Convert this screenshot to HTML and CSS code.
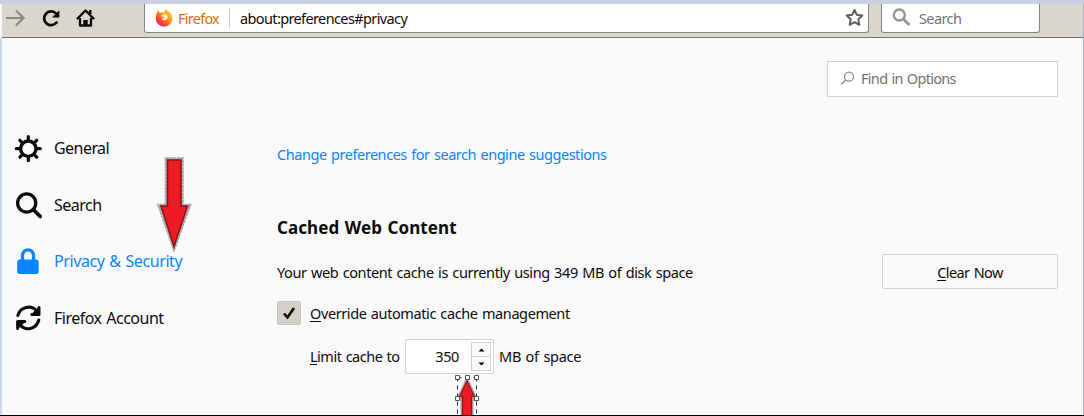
FILE: index.html
```html
<!DOCTYPE html>
<html lang="en">
<head>
<meta charset="utf-8">
<title>Options</title>
<link rel="stylesheet" href="styles.css">
</head>
<body>
<div class="window">
  <header class="toolbar">
    <svg class="nav-buttons" width="100" height="32" viewBox="0 4 100 32" fill="none">
      <path d="M6 18H23M16 10.500L23.500 18L16 25.500" stroke="#8b8984" stroke-width="2.200"/>
      <path d="M55.700 13.200A6.900 6.900 0 1 0 56.500 22.500" stroke="#0c0c0d" stroke-width="2.700" stroke-linecap="round"/>
      <path d="M59.300 10.300V17.500H52Z" fill="#0c0c0d"/>
      <path d="M77.500 18.500L85.500 10.500L93.500 18.500" stroke="#0c0c0d" stroke-width="2.400" stroke-linecap="round" stroke-linejoin="round"/>
      <path d="M80 18V25.500H91V18" stroke="#0c0c0d" stroke-width="2.300" stroke-linejoin="round"/>
      <path d="M83.300 25.500V20H87.700V25.500Z" fill="#0c0c0d"/>
      <path d="M89 10H91.500V14H89Z" fill="#0c0c0d"/>
    </svg>
    <div class="urlbar">
      <svg class="fox" width="18" height="18" viewBox="0 0 18 18">
        <defs><linearGradient id="flame" x1="1" y1="0" x2="0.200" y2="1"><stop offset="0" stop-color="#ffe226"/><stop offset=".45" stop-color="#ff9a16"/><stop offset=".75" stop-color="#ff4032"/><stop offset="1" stop-color="#e8178a"/></linearGradient></defs>
        <path d="M3.300 1.500L5 4C6 3 7.500 3.300 8.500 3.700L11 0.500C14.500 2 17.300 5 17.300 9.500A8.200 8.200 0 0 1 .8 9.500C.8 6.500 1.700 3.300 3.300 1.500Z" fill="url(#flame)"/>
        <path d="M8.500 5.200C7 6 6 6.500 6.500 7.500L9.200 7.800C9.500 9 8 9.300 6.800 10C8 12.500 12.300 11.700 12.500 8C12.500 5.500 10.500 4.500 8.500 5.200Z" fill="#fff0dc"/>
      </svg>
      <span class="identity t-identity">Firefox</span>
      <span class="url t-url">about:preferences#privacy</span>
      <svg class="star" width="19" height="19" viewBox="0 0 19 19"><path d="M9.500 1.800L11.800 6.800L17.300 7.500L13.300 11.300L14.300 16.900L9.500 14.200L4.700 16.900L5.700 11.300L1.700 7.500L7.200 6.800Z" fill="none" stroke="#5b5b5b" stroke-width="1.900" stroke-linejoin="round"/></svg>
    </div>
    <div class="searchbar">
      <svg width="19" height="19" viewBox="0 0 19 19" fill="none" stroke="#939393"><circle cx="7.300" cy="7" r="5.500" stroke-width="2.300"/><path d="M11.300 11L17.500 17" stroke-width="2.800"/></svg>
      <span class="t-search">Search</span>
    </div>
  </header>
  <div class="page">
    <nav class="sidebar">
      <a class="category">
        <svg width="28" height="28" viewBox="-14.300 -14.700 28 28" fill="none" stroke="#0c0c0d"><circle r="7.700" stroke-width="3.400"/><path d="M0-9V-12M0 9V12M-9 0H-12M9 0H12M6.400-6.400L8.400-8.400M-6.400-6.400L-8.400-8.400M6.400 6.400L8.400 8.400M-6.400 6.400L-8.400 8.400" stroke-width="3.200" stroke-linecap="round"/></svg>
        <span class="t-general">General</span>
      </a>
      <a class="category">
        <svg width="28" height="28" viewBox="-.7 -.5 28 28" fill="none" stroke="#0c0c0d"><circle cx="12" cy="11.500" r="9.100" stroke-width="3.300"/><path d="M19 18.500L25.500 25" stroke-width="3.800" stroke-linecap="round"/></svg>
        <span class="t-nav-search">Search</span>
      </a>
      <a class="category selected">
        <svg width="28" height="28" viewBox="-.7 -.5 28 28"><rect x="2.500" y="12" width="21.500" height="14.500" rx="2.500" fill="#0a84ff"/><path d="M7.800 13V8A5.500 5.700 0 0 1 18.800 8V13" fill="none" stroke="#0a84ff" stroke-width="3.300"/></svg>
        <span class="t-privacy">Privacy &amp; Security</span>
      </a>
      <a class="category">
        <svg width="28" height="28" viewBox="-.3 0 28 28" fill="none" stroke="#0c0c0d" stroke-width="3" stroke-linecap="round" stroke-linejoin="round"><path d="M3.500 11.500C6 2.500 17 .5 22.500 7M24.500 16C22 25.500 11 27.500 5.500 20.500"/><path d="M24.700 3.500V10.500H17.500M3.300 24.500V17.500H10.500"/><path d="M24.700 3.500V10.500H17.500ZM3.300 24.500V17.500H10.500Z" fill="#0c0c0d" stroke-width="1"/></svg>
        <span class="t-account">Firefox Account</span>
      </a>
    </nav>
    <main class="main">
      <div class="find">
        <svg width="15" height="15" viewBox="0 0 15 15" fill="none" stroke="#8c8c8c"><circle cx="9" cy="5.700" r="4.500" stroke-width="1.300"/><path d="M5.700 9L1.200 13.300" stroke-width="1.500"/></svg>
        <span class="t-find">Find in Options</span>
      </div>
      <a class="link t-link">Change preferences for search engine suggestions</a>
      <h2 class="heading t-heading">Cached Web Content</h2>
      <div class="usage">
        <span class="t-usage">Your web content cache is currently using 349 MB of disk space</span>
        <button class="clear"><span class="t-clear"><u>C</u>lear Now</span></button>
      </div>
      <label class="override">
        <span class="checkbox"><svg width="14" height="14" viewBox="0 0 14 14"><path d="M2 7.500L5.500 11.500L12 2" fill="none" stroke="#0c0c0d" stroke-width="2.600"/></svg></span>
        <span class="t-override"><u>O</u>verride automatic cache management</span>
      </label>
      <div class="limit">
        <span class="t-limit"><u>L</u>imit cache to</span>
        <div class="number">
          <span class="t-number">350</span>
          <div class="spinner">
            <span class="step"><svg width="7" height="4" viewBox="0 0 7 4"><path d="M.5 3.500L3.500.5L6.500 3.500Z"/></svg></span>
            <span class="step"><svg width="7" height="4" viewBox="0 0 7 4"><path d="M.5.500L3.500 3.500L6.500.5Z"/></svg></span>
          </div>
        </div>
        <span class="t-space">MB of space</span>
      </div>
    </main>
  </div>
  <svg class="arrow-down" width="36" height="98" viewBox="156 154 36 98">
    <path d="M166 158.500H182.500V205H190L174 249.500L158.500 205H166Z" fill="#aaa" stroke="#a5a5a5" stroke-width="2.500" stroke-dasharray="3 .6"/>
    <path d="M167.500 160H181V206H187.500L174 246.500L161 206H167.500Z" fill="#ed1c24" stroke="#8c1218" stroke-width="1.500"/>
  </svg>
  <svg class="arrow-up" width="28" height="41" viewBox="454 374 28 41">
    <path d="M467 378L476 398L472.500 401V416H461.500V401L458 398Z" fill="#aaa" stroke="#aaa" stroke-width="2"/>
    <path d="M467 381L474.500 396.500H471.500V417H462.500V396.500H459.500Z" fill="#ed1c24" stroke="#9c1319" stroke-width="1.300"/>
    <path d="M457.500 377.500V415M476.500 377.500V415M457.500 377.500H476.500" fill="none" stroke="#172b70" stroke-dasharray="4 4"/>
    <path d="M455.500 375.500h4v4h-4zM465.500 375.500h4v4h-4zM474.500 375.500h4v4h-4zM455.500 396.500h4v4h-4zM474.500 396.500h4v4h-4z" fill="#fff" stroke="#555"/>
  </svg>
</div>
</body>
</html>
```
FILE: styles.css
```css
* { box-sizing: border-box; }
body {
  margin: 0;
  font: 14.500px/20px "Noto Sans", sans-serif;
  letter-spacing: -.4px;
  word-spacing: 1px;
  color: #0c0c0d;
}
span, a, h2 { white-space: nowrap; }
svg { flex: none; display: block; }
u { text-decoration: none; border-bottom: 1px solid; display: inline-block; line-height: 15px; }

.window {
  position: relative;
  width: 1084px;
  height: 416px;
  overflow: hidden;
  background: #f9f9fa;
  border-top: 4px solid #c8d0e4;
  border-bottom: 1px solid #000;
  display: flex;
  flex-direction: column;
}
.toolbar {
  height: 34px;
  margin-left: 2px;
  background: #d9d6ce;
  border-bottom: 1px solid #74727c;
  border-right: 1px solid #adb0c8;
  display: flex;
  align-items: flex-start;
}
.nav-buttons { margin-left: -2px; }
.urlbar, .searchbar {
  height: 29px;
  background: #fff;
  border: 1px solid #858585;
  border-top: 0;
  border-radius: 0 0 3px 3px;
  display: flex;
  align-items: center;
}
.urlbar { width: 725px; margin-left: 44px; padding: 0 4px 1px 10px; }
.identity {
  width: 52px;
  margin-left: 5px;
  border-right: 1px solid #d0d0d0;
  color: #d76e00;
}
.url { margin-left: 10px; flex: 1; }
.searchbar { width: 159px; margin-left: 12px; padding: 0 0 1px 10px; color: #737373; }
.searchbar span { margin-left: 8px; }

.page {
  flex: 1;
  min-height: 0;
  display: flex;
  border-left: 2px solid #d0d7e6;
  border-right: 1px solid #adb0c8;
}
.sidebar {
  width: 275px;
  padding: 82px 0 0 12px;
  display: flex;
  flex-direction: column;
}
.category {
  height: 56.500px;
  display: flex;
  align-items: center;
  font-size: 16px;
}
.category span { margin-left: 12px; }
.selected { color: #0a84ff; }
.main {
  width: 781px;
  padding-top: 23px;
  display: flex;
  flex-direction: column;
}
.find {
  width: 231px;
  height: 36px;
  align-self: flex-end;
  border: 1px solid #d2d2d6;
  background: #fff;
  color: #737373;
  display: flex;
  align-items: center;
  padding: 0 0 2px 12px;
}
.find span { margin-left: 6px; }
.link { margin-top: 47px; color: #0a84ff; align-self: flex-start; }
.heading { margin: 54px 0 0; font-size: 17px; line-height: 20px; align-self: flex-start; }
.usage { display: flex; justify-content: space-between; align-items: center; margin-top: 16px; height: 35px; }
.clear {
  width: 176px;
  height: 35px;
  border: 1px solid #d2d2d6;
  border-radius: 2px;
  background: #fafafb;
  font: inherit;
  color: inherit;
  padding: 0;
}
.override { display: flex; align-items: center; height: 24px; margin-top: 12px; }
.checkbox {
  width: 24px;
  height: 24px;
  margin-right: 9px;
  background: #d4d0c8;
  border: 1px solid #c8c5be;
  border-radius: 2px;
  display: grid;
  place-items: center;
}
.limit { display: flex; align-items: center; height: 35px; margin-top: 14px; padding-left: 33px; }
.limit span { line-height: 18px; }
.t-limit, .t-number, .t-space { padding-bottom: 2px; }
.number {
  width: 89px;
  height: 35px;
  margin-right: 5px;
  padding: 2px;
  border: 1px solid #d2d2d6;
  border-radius: 2px;
  background: #fff;
  display: flex;
  align-items: center;
  justify-content: flex-end;
}
.spinner { width: 20px; height: 29px; margin-left: 12px; border: 1px solid #d2d2d6; background: #f9f9fa; }
.step { height: 13px; display: grid; place-items: center; }
.step + .step { height: 14px; border-top: 1px solid #d2d2d6; }
.arrow-down { position: absolute; left: 156px; top: 150px; }
.arrow-up { position: absolute; left: 454px; top: 370px; }

/* per-label tracking */
.t-identity { letter-spacing: -.75px; }
.t-url { letter-spacing: -.62px; }
.t-search { letter-spacing: -.6px; }
.t-find { letter-spacing: -.7px; }
.t-general { letter-spacing: -.55px; }
.t-nav-search, .t-account { letter-spacing: -.5px; }
.t-link { letter-spacing: -.45px; }
.t-heading { letter-spacing: .08px; }
.t-clear { letter-spacing: -.6px; word-spacing: 1px; }
.t-limit { width: 95px; letter-spacing: -.5px; }
.t-space { letter-spacing: -.25px; }
```
